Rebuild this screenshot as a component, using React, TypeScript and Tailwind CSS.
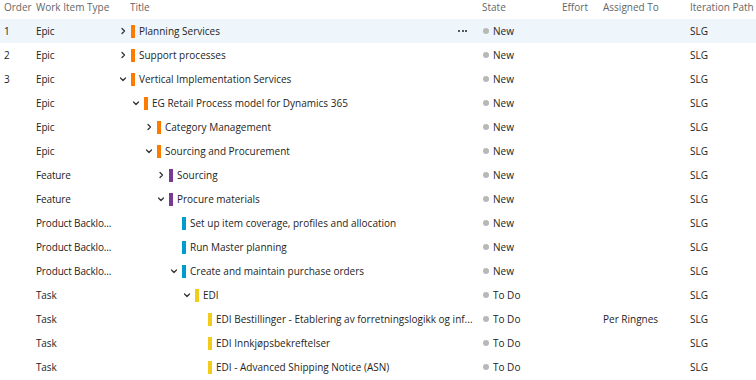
import React from "react";

type Row = {
  order: string;
  type: string;
  level: number;
  chevron: "none" | "right" | "down";
  color: string;
  title: string;
  state: string;
  assigned?: string;
  selected?: boolean;
};

const EPIC = "bg-[#ff7b00]";
const FEAT = "bg-[#773b93]";
const PBI = "bg-[#009ccc]";
const TASK = "bg-[#f2cb1d]";

const rows: Row[] = [
  { order: "1", type: "Epic", level: 0, chevron: "right", color: EPIC, title: "Planning Services", state: "New", selected: true },
  { order: "2", type: "Epic", level: 0, chevron: "right", color: EPIC, title: "Support processes", state: "New" },
  { order: "3", type: "Epic", level: 0, chevron: "down", color: EPIC, title: "Vertical Implementation Services", state: "New" },
  { order: "", type: "Epic", level: 1, chevron: "down", color: EPIC, title: "EG Retail Process model for Dynamics 365", state: "New" },
  { order: "", type: "Epic", level: 2, chevron: "right", color: EPIC, title: "Category Management", state: "New" },
  { order: "", type: "Epic", level: 2, chevron: "down", color: EPIC, title: "Sourcing and Procurement", state: "New" },
  { order: "", type: "Feature", level: 3, chevron: "right", color: FEAT, title: "Sourcing", state: "New" },
  { order: "", type: "Feature", level: 3, chevron: "down", color: FEAT, title: "Procure materials", state: "New" },
  { order: "", type: "Product Backlo...", level: 4, chevron: "none", color: PBI, title: "Set up item coverage, profiles and allocation", state: "New" },
  { order: "", type: "Product Backlo...", level: 4, chevron: "none", color: PBI, title: "Run Master planning", state: "New" },
  { order: "", type: "Product Backlo...", level: 4, chevron: "down", color: PBI, title: "Create and maintain purchase orders", state: "New" },
  { order: "", type: "Task", level: 5, chevron: "down", color: TASK, title: "EDI", state: "To Do" },
  { order: "", type: "Task", level: 6, chevron: "none", color: TASK, title: "EDI Bestillinger - Etablering av forretningslogikk og inf...", state: "To Do", assigned: "Per Ringnes" },
  { order: "", type: "Task", level: 6, chevron: "none", color: TASK, title: "EDI Innkjøpsbekreftelser", state: "To Do" },
  { order: "", type: "Task", level: 6, chevron: "none", color: TASK, title: "EDI - Advanced Shipping Notice (ASN)", state: "To Do" },
];

const indent = ["pl-0", "pl-[13px]", "pl-[26px]", "pl-[38px]", "pl-[51px]", "pl-[64px]", "pl-[77px]"];

const grid = "grid grid-cols-[36px_80px_366px_80px_41px_87px_1fr]";

function Chevron({ dir }: { dir: "none" | "right" | "down" }) {
  if (dir === "none") return <span className="w-[13px] shrink-0" />;
  return (
    <span className="w-[13px] shrink-0 flex items-center justify-center">
      <svg width="8" height="8" viewBox="0 0 8 8" fill="none" stroke="#333" strokeWidth="1.25" strokeLinecap="round" strokeLinejoin="round">
        {dir === "right" ? <path d="M3 1.5 L5.5 4 L3 6.5" /> : <path d="M1.5 3 L4 5.5 L6.5 3" />}
      </svg>
    </span>
  );
}

export default function App() {
  return (
    <div className="w-[756px] h-[380px] bg-white overflow-hidden text-[10px] text-[#252423]" style={{ fontFamily: '"Open Sans", "Noto Sans", sans-serif' }}>
      <div className={`${grid} h-[19px] items-start leading-[15px] text-[#666666]`}>
        <div className="pl-[4px]">Order</div>
        <div>Work Item Type</div>
        <div className="pl-[14px]">Title</div>
        <div>State</div>
        <div>Effort</div>
        <div>Assigned To</div>
        <div className="whitespace-nowrap">Iteration Path</div>
      </div>
      {rows.map((r, i) => (
        <div key={i} className={`${grid} h-[24px] items-center ${r.selected ? "bg-[#eef5fb]" : ""}`}>
          <div className="pl-[4px]">{r.order}</div>
          <div className="whitespace-nowrap tracking-[-0.15px]">{r.type}</div>
          <div className={`flex items-center min-w-0 pr-[6px] ${indent[r.level]}`}>
            <Chevron dir={r.chevron} />
            <span className={`ml-[2px] w-[4px] h-[13px] shrink-0 ${r.color}`} />
            <span className="ml-[4px] whitespace-nowrap">{r.title}</span>
            {r.selected && (
              <span className="ml-auto mr-[9px] flex items-center gap-[1.5px] shrink-0">
                <span className="w-[2px] h-[2px] rounded-full bg-[#222]" />
                <span className="w-[2px] h-[2px] rounded-full bg-[#222]" />
                <span className="w-[2px] h-[2px] rounded-full bg-[#222]" />
              </span>
            )}
          </div>
          <div className="flex items-center">
            <span className="w-[6px] h-[6px] rounded-full bg-[#b8b8b8] ml-[1px] mr-[4px]" />
            <span>{r.state}</span>
          </div>
          <div />
          <div>{r.assigned ?? ""}</div>
          <div>SLG</div>
        </div>
      ))}
    </div>
  );
}
